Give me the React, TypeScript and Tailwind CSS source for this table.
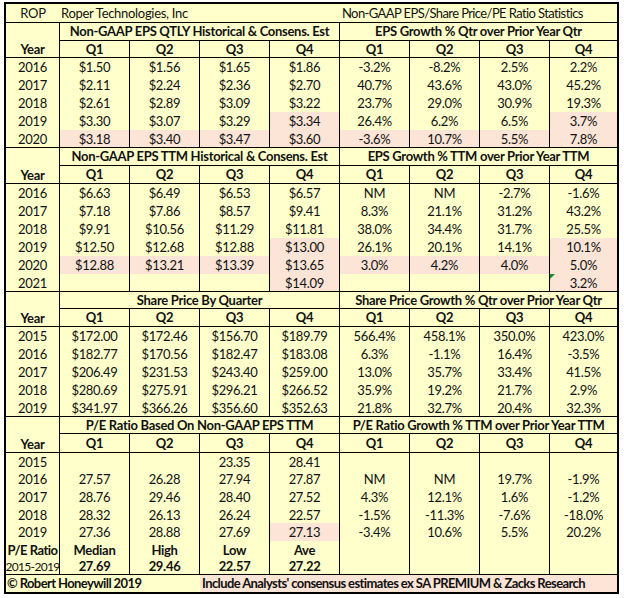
import React from "react";

interface ROW {
  y: string,
  l: string[],
  r: string[],
  pl?: number[],
  pr?: number[],
  bold?: boolean,
  small?: boolean,
  flag?: boolean
}

interface SECTION {
  left: string,
  right: string,
  rows: string,
  data: ROW[]
}

const sections: SECTION[] = [
  {
    left: "Non-GAAP EPS QTLY Historical & Consens. Est",
    right: "EPS Growth % Qtr over Prior Year Qtr",
    rows: "grid-rows-[18px_17px_repeat(5,18px)]",
    data: [
      { y: "2016", l: ["$1.50", "$1.56", "$1.65", "$1.86"], r: ["-3.2%", "-8.2%", "2.5%", "2.2%"] },
      { y: "2017", l: ["$2.11", "$2.24", "$2.36", "$2.70"], r: ["40.7%", "43.6%", "43.0%", "45.2%"] },
      { y: "2018", l: ["$2.61", "$2.89", "$3.09", "$3.22"], r: ["23.7%", "29.0%", "30.9%", "19.3%"] },
      { y: "2019", l: ["$3.30", "$3.07", "$3.29", "$3.34"], r: ["26.4%", "6.2%", "6.5%", "3.7%"], pl: [3], pr: [3] },
      { y: "2020", l: ["$3.18", "$3.40", "$3.47", "$3.60"], r: ["-3.6%", "10.7%", "5.5%", "7.8%"], pl: [0, 1, 2, 3], pr: [0, 1, 2, 3] },
    ]
  },
  {
    left: "Non-GAAP EPS TTM Historical & Consens. Est",
    right: "EPS Growth % TTM over Prior Year TTM",
    rows: "grid-rows-[18px_18px_repeat(6,18px)]",
    data: [
      { y: "2016", l: ["$6.63", "$6.49", "$6.53", "$6.57"], r: ["NM", "NM", "-2.7%", "-1.6%"] },
      { y: "2017", l: ["$7.18", "$7.86", "$8.57", "$9.41"], r: ["8.3%", "21.1%", "31.2%", "43.2%"] },
      { y: "2018", l: ["$9.91", "$10.56", "$11.29", "$11.81"], r: ["38.0%", "34.4%", "31.7%", "25.5%"] },
      { y: "2019", l: ["$12.50", "$12.68", "$12.88", "$13.00"], r: ["26.1%", "20.1%", "14.1%", "10.1%"], pl: [3], pr: [3] },
      { y: "2020", l: ["$12.88", "$13.21", "$13.39", "$13.65"], r: ["3.0%", "4.2%", "4.0%", "5.0%"], pl: [0, 1, 2, 3], pr: [0, 1, 2, 3] },
      { y: "2021", l: ["", "", "", "$14.09"], r: ["", "", "", "3.2%"], pl: [3], pr: [3], flag: true },
    ]
  },
  {
    left: "Share Price By Quarter",
    right: "Share Price Growth % Qtr over Prior Year Qtr",
    rows: "grid-rows-[17px_18px_repeat(5,18px)]",
    data: [
      { y: "2015", l: ["$172.00", "$172.46", "$156.70", "$189.79"], r: ["566.4%", "458.1%", "350.0%", "423.0%"] },
      { y: "2016", l: ["$182.77", "$170.56", "$182.47", "$183.08"], r: ["6.3%", "-1.1%", "16.4%", "-3.5%"] },
      { y: "2017", l: ["$206.49", "$231.53", "$243.40", "$259.00"], r: ["13.0%", "35.7%", "33.4%", "41.5%"] },
      { y: "2018", l: ["$280.69", "$275.91", "$296.21", "$266.52"], r: ["35.9%", "19.2%", "21.7%", "2.9%"] },
      { y: "2019", l: ["$341.97", "$366.26", "$356.60", "$352.63"], r: ["21.8%", "32.7%", "20.4%", "32.3%"] },
    ]
  },
  {
    left: "P/E Ratio Based On Non-GAAP EPS TTM",
    right: "P/E Ratio Growth % TTM over Prior Year TTM",
    rows: "grid-rows-[17px_19px_17px_18px_18px_17px_18px_17px_17px]",
    data: [
      { y: "2015", l: ["", "", "23.35", "28.41"], r: ["", "", "", ""] },
      { y: "2016", l: ["27.57", "26.28", "27.94", "27.87"], r: ["NM", "NM", "19.7%", "-1.9%"] },
      { y: "2017", l: ["28.76", "29.46", "28.40", "27.52"], r: ["4.3%", "12.1%", "1.6%", "-1.2%"] },
      { y: "2018", l: ["28.32", "26.13", "26.24", "22.57"], r: ["-1.5%", "-11.3%", "-7.6%", "-18.0%"] },
      { y: "2019", l: ["27.36", "28.88", "27.69", "27.13"], r: ["-3.4%", "10.6%", "5.5%", "20.2%"], pl: [3] },
      { y: "P/E Ratio", l: ["Median", "High", "Low", "Ave"], r: ["", "", "", ""], bold: true },
      { y: "2015-2019", l: ["27.69", "29.46", "22.57", "27.22"], r: ["", "", "", ""], bold: true, small: true },
    ]
  },
]

const Section = ({ s }: { s: SECTION }) => {
  const last = s.data.length - 1
  return (
    <div className={"grid grid-cols-[54px_repeat(7,70px)_67px] " + s.rows}>
      <div className="row-span-2 border-r border-b border-black flex items-end justify-center pb-[1px] font-bold">Year</div>
      <div className="col-span-4 border-r border-b border-black flex items-center justify-center font-bold">{s.left}</div>
      <div className="col-span-4 border-b border-black flex items-center justify-center font-bold">{s.right}</div>
      {["Q1", "Q2", "Q3", "Q4", "Q1", "Q2", "Q3", "Q4"].map((q, i) => (
        <div key={i} className={"border-b border-black flex items-center justify-center font-bold " + (i < 7 ? "border-r" : "")}>{q}</div>
      ))}
      {s.data.map((row, ri) => {
        const bottom = ri === last ? " border-b" : ""
        return (
          <React.Fragment key={ri}>
            <div className={"border-r border-black flex items-center justify-center whitespace-nowrap overflow-hidden pt-[1px]" + bottom + (row.bold && !row.small ? " font-bold tracking-[-0.5px]" : "") + (row.small ? " text-[12px] tracking-[-0.7px]" : "")}>{row.y}</div>
            {row.l.map((v, i) => (
              <div key={"l" + i} className={"border-r border-black flex items-center justify-center pt-[1px]" + bottom + (row.bold ? " font-bold" : "") + (row.pl?.includes(i) ? " bg-[#fce4d6]" : "")}>{v}</div>
            ))}
            {row.r.map((v, i) => (
              <div key={"r" + i} className={"relative border-black flex items-center justify-center pt-[1px]" + bottom + (i < 3 ? " border-r" : "") + (row.pr?.includes(i) ? " bg-[#fce4d6]" : "")}>
                {row.flag && i === 3 && (
                  <span className="absolute left-0 top-0 w-0 h-0 border-t-[5px] border-r-[5px] border-t-[#1e8a2e] border-r-transparent" />
                )}
                {v}
              </div>
            ))}
          </React.Fragment>
        )
      })}
    </div>
  )
}

const App = () => {
  return (
    <div className="w-[624px] h-[598px] bg-white overflow-hidden">
      <div className="ml-1 mt-0.5 w-[615px] border-2 border-black bg-[#ffffcc] text-[#111] text-[13px] leading-none tracking-[-0.3px]" style={{ fontFamily: "Lato, 'Liberation Sans', sans-serif" }}>
        <div className="flex h-[19px] border-b border-black">
          <div className="w-[54px] flex items-center justify-center">ROP</div>
          <div className="w-[280px] flex items-center pl-[1px]">Roper Technologies, Inc</div>
          <div className="flex-1 flex items-center pl-[2px] tracking-[-0.6px] whitespace-nowrap">Non-GAAP EPS/Share Price/PE Ratio Statistics</div>
        </div>
        {sections.map((s, i) => <Section key={i} s={s} />)}
        <div className="flex h-[17px] font-bold tracking-[-0.6px] whitespace-nowrap">
          <div className="w-[194px] flex items-center pl-[1px]">© Robert Honeywill 2019</div>
          <div className="flex-1 flex items-center pl-[2px] bg-[#fce4d6]">Include Analysts' consensus estimates ex SA PREMIUM &amp; Zacks Research</div>
        </div>
      </div>
    </div>
  )
}

export default App
